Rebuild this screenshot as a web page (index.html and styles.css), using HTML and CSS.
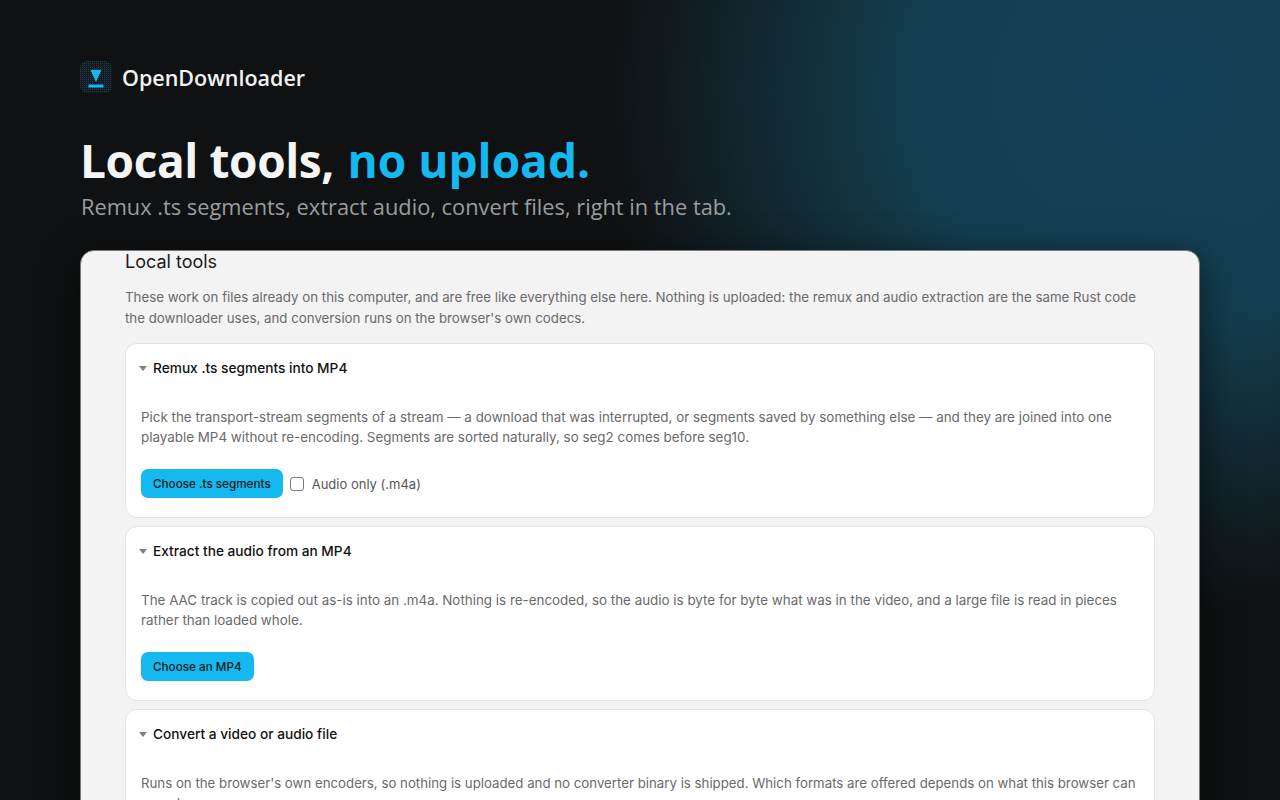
FILE: index.html
```html
<!DOCTYPE html>
<html lang="en">
<head>
    <meta charset="UTF-8">
    <meta name="viewport" content="width=device-width, initial-scale=1.0">
    <title>OpenDownloader - Local tools</title>
    <link rel="stylesheet" href="styles.css">
</head>
<body>
    <div class="page">
        <div class="brand">
            <svg class="logo" width="32" height="32" viewBox="0 0 32 32">
                <defs>
                    <pattern id="dots" width="2" height="2" patternUnits="userSpaceOnUse">
                        <rect width="2" height="2" fill="#131b20"/>
                        <rect width="1" height="1" fill="#1f3e4d"/>
                    </pattern>
                </defs>
                <rect width="32" height="32" rx="7" fill="url(#dots)"/>
                <path d="M10.5 9h11L16 21z" fill="#15b8ef"/>
                <rect x="8.5" y="23.5" width="15" height="3" fill="#15b8ef"/>
            </svg>
            <span class="brand-name">OpenDownloader</span>
        </div>

        <h1>Local tools, <span class="accent">no upload.</span></h1>
        <p class="tagline">Remux .ts segments, extract audio, convert files, right in the tab.</p>

        <div class="panel">
            <h2>Local tools</h2>
            <p class="intro">These work on files already on this computer, and are free like everything else here. Nothing is uploaded: the remux and audio extraction are the same Rust code the downloader uses, and conversion runs on the browser's own codecs.</p>

            <details class="tool" open>
                <summary>Remux .ts segments into MP4</summary>
                <p>Pick the transport-stream segments of a stream — a download that was interrupted, or segments saved by something else — and they are joined into one playable MP4 without re-encoding. Segments are sorted naturally, so seg2 comes before seg10.</p>
                <div class="actions">
                    <button class="btn">Choose .ts segments</button>
                    <label class="check"><input type="checkbox"> Audio only (.m4a)</label>
                </div>
            </details>

            <details class="tool" open>
                <summary>Extract the audio from an MP4</summary>
                <p>The AAC track is copied out as-is into an .m4a. Nothing is re-encoded, so the audio is byte for byte what was in the video, and a large file is read in pieces rather than loaded whole.</p>
                <div class="actions">
                    <button class="btn">Choose an MP4</button>
                </div>
            </details>

            <details class="tool" open>
                <summary>Convert a video or audio file</summary>
                <p class="tight">Runs on the browser's own encoders, so nothing is uploaded and no converter binary is shipped. Which formats are offered depends on what this browser can encode.</p>
            </details>
        </div>
    </div>
</body>
</html>
```

FILE: styles.css
```css
html, body {
    margin: 0;
    height: 800px;
    overflow: hidden;
}
body {
    font-family: "Open Sans", sans-serif;
    background-color: #101112;
    background-image: radial-gradient(ellipse 560px 520px at 1160px 90px, #14425a 0%, rgba(20,66,84,0.92) 45%, rgba(20,66,84,0) 100%);
}
.page {
    padding: 61px 80px 0;
}
.brand {
    display: flex;
    align-items: center;
    gap: 10px;
    height: 32px;
}
.brand-name {
    color: #f2f2f2;
    font-size: 21.5px;
    font-weight: 600;
}
h1 {
    margin: 34px 0 0;
    color: #f5f5f5;
    font-size: 46px;
    line-height: 66px;
    font-weight: 700;
    letter-spacing: -0.4px;
}
.accent {
    margin-left: 2px;
    color: #15b8ef;
    letter-spacing: 0;
}
.tagline {
    margin: 1px 0 0;
    padding-left: 1px;
    color: #9a9d9f;
    font-size: 21.8px;
    line-height: 26px;
}
.panel {
    margin-top: 30px;
    padding: 1px 44px 0;
    height: 700px;
    box-sizing: border-box;
    background: #f3f3f3;
    border: 1px solid #77797a;
    border-radius: 14px;
    box-shadow: 0 10px 40px rgba(0,0,0,0.6);
    font-family: Inter, sans-serif;
}
h2 {
    margin: 0;
    color: #1b1b1b;
    font-size: 18px;
    font-weight: 400;
    line-height: 20px;
}
.intro {
    margin: 15px 0 15px;
    color: #6a6a6a;
    font-size: 13.3px;
    line-height: 20.5px;
}
.tool {
    margin-bottom: 8px;
    padding: 0 15px 19px;
    background: #fff;
    border: 1px solid #e2e2e2;
    border-radius: 12px;
}
.tool summary {
    display: flex;
    align-items: center;
    gap: 6px;
    padding: 14px 0 0;
    color: #111;
    font-size: 13.7px;
    font-weight: 500;
    line-height: 20px;
    list-style: none;
}
.tool summary::before {
    content: "";
    margin-left: -2px;
    border-top: 5px solid #808080;
    border-left: 4px solid transparent;
    border-right: 4px solid transparent;
}
.tool p {
    margin: 29px 0 0;
    color: #6a6a6a;
    font-size: 13.4px;
    line-height: 20px;
}
.tool p.tight {
    font-size: 13.25px;
}
.actions {
    display: flex;
    align-items: center;
    gap: 7px;
    margin-top: 22px;
}
.btn {
    height: 29px;
    padding: 0 12px;
    background: #15b8ef;
    border: 0;
    border-radius: 7px;
    color: #0b1a20;
    font-family: Inter, sans-serif;
    font-size: 11.7px;
    font-weight: 500;
}
.check {
    display: flex;
    align-items: center;
    gap: 8px;
    color: #555;
    font-size: 13px;
}
.check input {
    appearance: none;
    width: 14px;
    height: 14px;
    margin: 0;
    background: #fff;
    border: 1px solid #777;
    border-radius: 3px;
}
```
